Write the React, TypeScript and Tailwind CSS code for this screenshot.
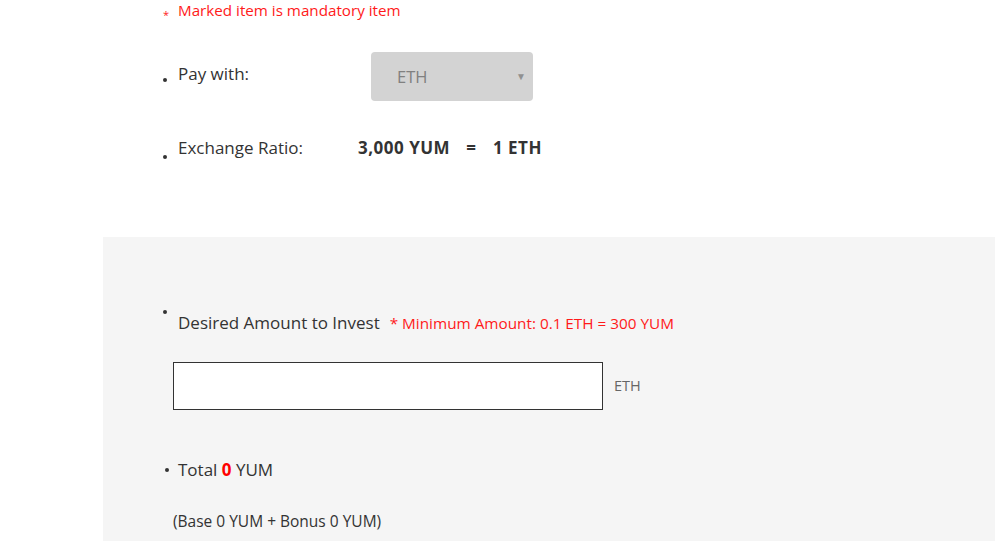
import React from "react";

const font = { fontFamily: '"Open Sans", "Noto Sans", sans-serif' };

function Dot({ className = "" }: { className?: string }) {
  return <span className={"block w-[4px] h-[4px] rounded-full bg-[#333] " + className} />;
}

export default function App() {
  return (
    <div className="w-[995px] h-[541px] overflow-hidden bg-white text-[#333]" style={font}>
      <div className="pl-[163px] -mt-[1px]">
        <div className="flex items-start h-[22px]">
          <span className="text-[#ff1a1a] text-[11px] w-[15px] mt-[8px]">*</span>
          <span className="text-[#ff1a1a] text-[15.2px] leading-[22px]">Marked item is mandatory item</span>
        </div>
      </div>
      <div className="pl-[163px] mt-[31px] flex items-start">
        <div className="flex items-center h-[50px] w-[208px]">
          <span className="w-[15px] flex mt-[6px]"><Dot /></span>
          <span className="text-[17px] -mt-[6px]">Pay with:</span>
        </div>
        <div className="w-[162px] h-[49px] rounded-[4px] bg-[#d3d3d3] flex items-center justify-between pl-[26px] pr-[7px]">
          <span className="text-[16.5px] text-[#808080] mt-[1px]">ETH</span>
          <span className="text-[10px] text-[#909090]">▼</span>
        </div>
      </div>
      <div className="pl-[163px] mt-[33px] flex items-center h-[26px]">
        <span className="w-[15px] flex mt-[18px]"><Dot /></span>
        <span className="w-[180px] text-[17px]">Exchange Ratio:</span>
        <span className="text-[17px] font-bold tracking-[0.5px]">3,000 YUM</span>
        <span className="text-[17px] font-bold ml-[16px]">=</span>
        <span className="text-[17px] font-bold tracking-[0.5px] ml-[17px]">1 ETH</span>
      </div>
      <div className="ml-[103px] mt-[76px] h-[400px] bg-[#f5f5f5] pl-[60px] pt-[73px]">
        <div className="flex items-end">
          <span className="w-[15px] flex self-start mt-[0px]"><Dot /></span>
          <span className="text-[17px] leading-[26px]">Desired Amount to Invest</span>
          <span className="text-[15.3px] text-[#ff1a1a] ml-[10px] leading-[26px]">* Minimum Amount: 0.1 ETH = 300 YUM</span>
        </div>
        <div className="flex items-center mt-[26px] ml-[10px]">
          <div className="w-[430px] h-[48px] border border-[#333] bg-white" />
          <span className="ml-[11px] text-[14.5px] text-[#666]">ETH</span>
        </div>
        <div className="flex items-center mt-[47px] ml-[2px]">
          <span className="w-[13px] flex mt-[1px]"><Dot /></span>
          <span className="text-[17px]">Total <span className="font-bold text-[#ff0000]">0</span> YUM</span>
        </div>
        <div className="ml-[10px] mt-[27px] text-[15.5px]">(Base 0 YUM + Bonus 0 YUM)</div>
      </div>
    </div>
  );
}
